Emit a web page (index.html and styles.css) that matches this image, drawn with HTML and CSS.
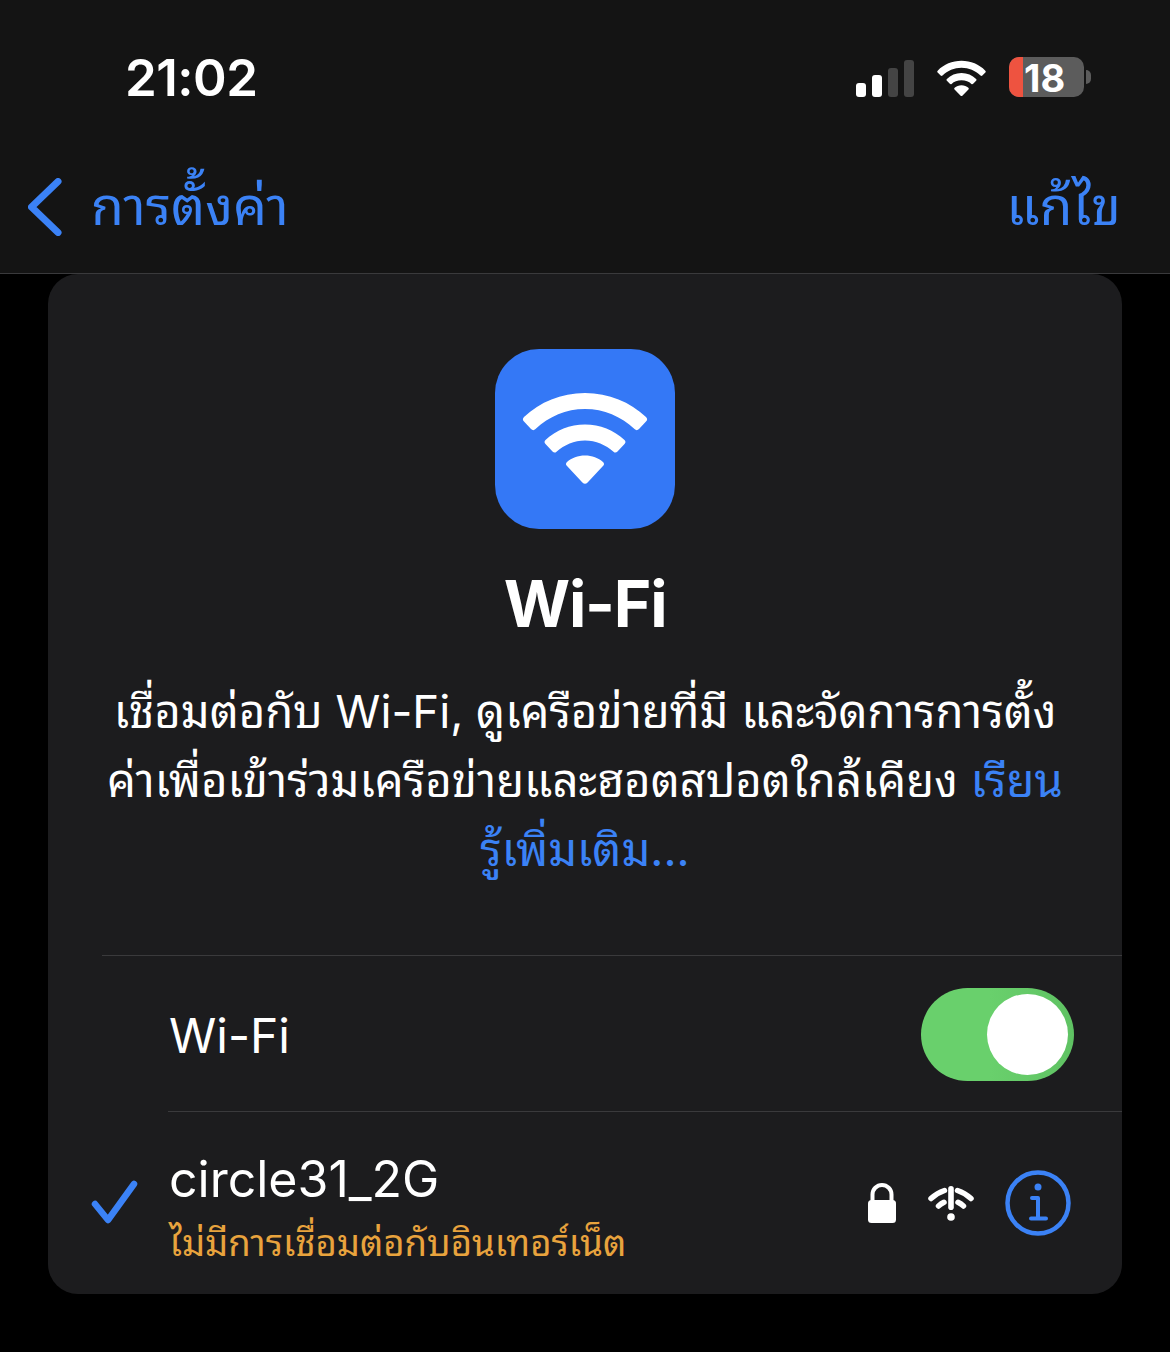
FILE: index.html
```html
<!DOCTYPE html>
<html lang="th">
<head>
  <meta charset="UTF-8" />
  <title>Wi-Fi</title>
  <link rel="stylesheet" href="styles.css">
</head>
<body>
  <header class="top">
    <div class="status">
      <span class="time">21:02</span>
      <div class="status-icons">
        <div class="signal">
          <i class="bar b1"></i><i class="bar b2"></i><i class="bar b3"></i><i class="bar b4"></i>
        </div>
        <svg class="status-wifi" viewBox="0 0 50 36">
          <path fill="#fff" d="M25 0C15.500 0 7 3.700 .7 10c-.6.600-.6 1.300 0 1.900l3 3.100c.6.600 1.300.6 1.900 0C10.800 9.900 17.500 7 25 7s14.200 2.900 19.400 8c.6.600 1.300.6 1.900 0l3-3.100c.6-.600.6-1.300 0-1.900C43 3.700 34.500 0 25 0z"/>
          <path fill="#fff" d="M25 12.500c-5.800 0-11 2.300-14.900 6-.6.600-.6 1.200 0 1.800l3 3.100c.6.600 1.200.6 1.800.1 2.500-2.200 5.900-3.600 10.100-3.600s7.600 1.400 10.100 3.600c.6.500 1.200.5 1.800-.1l3-3.100c.6-.600.6-1.200 0-1.800-3.900-3.700-9.100-6-14.900-6z"/>
          <path fill="#fff" d="M25 25c-2.800 0-5.200.9-7 2.500-.6.500-.6 1.100-.1 1.600l6 6.300c.7.700 1.500.7 2.200 0l6-6.300c.5-.5.5-1.100-.1-1.600-1.800-1.600-4.200-2.500-7-2.500z"/>
        </svg>
        <div class="battery">
          <div class="battery-body"><span class="battery-low"></span><span class="battery-num">18</span></div>
          <span class="battery-tip"></span>
        </div>
      </div>
    </div>
    <nav class="nav">
      <a class="back">
        <svg class="chevron" viewBox="0 0 34 58"><path d="M30 3.500 3.500 29 30 54.500" fill="none" stroke="#3b82f6" stroke-width="7" stroke-linecap="round" stroke-linejoin="round"/></svg>
        <span class="back-text">การตั้งค่า</span>
      </a>
      <a class="edit">แก้ไข</a>
    </nav>
  </header>

  <main class="card">
    <div class="hero">
      <div class="app-icon">
        <svg viewBox="0 0 126 92" class="app-wifi">
          <path fill="#fff" d="M63 1C39 1 18 10 2 25c-1.500 1.500-1.500 3 0 4.500l7 7.500c1.500 1.500 3 1.500 4.500 0C27 24.500 44 17 63 17s36 7.500 49.500 20c1.500 1.500 3 1.500 4.500 0l7-7.500c1.500-1.500 1.500-3 0-4.500C108 10 87 1 63 1z"/>
          <path fill="#fff" d="M63 32.500c-15 0-29 5.800-39.500 15.500-1.300 1.300-1.300 2.800 0 4l7 7.500c1.300 1.300 2.700 1.400 4 .2C42.500 53 52 48.500 63 48.500s20.500 4.500 28.500 11.200c1.300 1.200 2.700 1.100 4-.2l7-7.500c1.300-1.200 1.300-2.700 0-4C92 38.300 78 32.500 63 32.500z"/>
          <path fill="#fff" d="M63 63.500c-7 0-13.500 2.400-18 6.500-1.300 1.100-1.300 2.500-.2 3.700l15.600 16.700c1.700 1.800 3.500 1.800 5.200 0l15.600-16.700c1.100-1.200 1.100-2.600-.2-3.700-4.500-4.100-11-6.500-18-6.500z"/>
        </svg>
      </div>
      <h1 class="title">Wi-Fi</h1>
      <p class="desc">เชื่อมต่อกับ Wi-Fi, ดูเครือข่ายที่มี และจัดการการตั้ง<br>ค่าเพื่อเข้าร่วมเครือข่ายและฮอตสปอตใกล้เคียง <a class="link">เรียน<br>รู้เพิ่มเติม...</a></p>
    </div>

    <div class="row-wifi">
      <span class="row-label">Wi-Fi</span>
      <div class="toggle"><span class="knob"></span></div>
    </div>

    <div class="row-net">
      <svg class="check" viewBox="0 0 48 46"><path d="M4 24 17 40 43 4" fill="none" stroke="#3b82f6" stroke-width="6.500" stroke-linecap="round" stroke-linejoin="round"/></svg>
      <div class="net-text">
        <div class="net-name">circle31_2G</div>
        <div class="net-sub">ไม่มีการเชื่อมต่อกับอินเทอร์เน็ต</div>
      </div>
      <div class="net-icons">
        <svg class="lock" viewBox="0 0 28 40">
          <path d="M4.500 19V11.500a9.500 9.500 0 0 1 19 0V19" fill="none" stroke="#fff" stroke-width="4"/>
          <rect x="0" y="17" width="28" height="23" rx="3.500" fill="#fff"/>
        </svg>
        <svg class="nowifi" viewBox="0 0 46 38">
          <g fill="none" stroke="#fff" stroke-width="5.500" stroke-linecap="round">
            <path d="M3 14.500Q9 9 16.500 6.500"/>
            <path d="M43 14.500Q37 9 29.500 6.500"/>
            <path d="M10.500 22Q13 19.800 16 18.300"/>
            <path d="M35.500 22Q33 19.800 30 18.300"/>
          </g>
          <rect x="20.200" y="2" width="5.600" height="24" rx="2.800" fill="#fff"/>
          <circle cx="23" cy="33" r="3.800" fill="#fff"/>
        </svg>
        <svg class="info" viewBox="0 0 66 66">
          <circle cx="33" cy="33" r="30.500" fill="none" stroke="#3b82f6" stroke-width="4.500"/>
          <circle cx="33" cy="17" r="3.500" fill="#3b82f6"/>
          <path d="M27 28h6v20.500M26 48.500h15" fill="none" stroke="#3b82f6" stroke-width="4" stroke-linecap="round" stroke-linejoin="round"/>
        </svg>
      </div>
    </div>
  </main>
</body>
</html>
```
FILE: styles.css
```css
* { box-sizing: border-box; }
body { margin: 0; background: #000; color: #fff; font-family: Inter, "Noto Sans Thai Looped", "Noto Sans", "Noto Sans Thai", "Liberation Sans", sans-serif; width: 1170px; height: 1352px; overflow: hidden; }

.top { background: #141414; height: 274px; border-bottom: 1px solid #3a3a3c; }
.status { height: 156px; display: flex; align-items: center; justify-content: space-between; padding: 0 79px 0 125px; }
.time { font-size: 51px; font-weight: 600; letter-spacing: -0.5px; margin-bottom: 2px; }
.status-icons { display: flex; align-items: center; }
.signal { display: flex; align-items: flex-end; gap: 6px; height: 37px; margin-right: 23px; }
.bar { width: 10px; border-radius: 3px; background: #fff; display: block; }
.b1 { height: 14px; }
.b2 { height: 22px; }
.b3 { height: 29px; background: #444; }
.b4 { height: 37px; background: #444; }
.status-wifi { width: 49px; height: 37px; margin-right: 23px; }
.battery { display: flex; align-items: center; margin-bottom: 2px; }
.battery-body { width: 75px; height: 40px; border-radius: 10px; background: #5c5c5c; display: flex; align-items: center; }
.battery-low { width: 14px; height: 100%; background: #ee5340; border-radius: 10px 0 0 10px; }
.battery-num { font-size: 38px; line-height: 40px; font-weight: 700; margin: 2px 0 0 1px; }
.battery-tip { width: 5px; height: 14px; background: #5c5c5c; border-radius: 0 7px 7px 0; margin-left: 2px; }

.nav { height: 102px; display: flex; align-items: center; justify-content: space-between; padding: 0 49px 12px 28px; font-size: 53.500px; color: #3b82f6; }
.back { display: flex; align-items: center; gap: 29px; }
.chevron { width: 34px; height: 58px; margin-top: 12px; }

.card { margin: 0 48px; height: 1020px; background: #1c1c1e; border-radius: 30px; }
.hero { display: flex; flex-direction: column; align-items: center; padding: 75px 54px 0 0; height: 682px; border-bottom: 1px solid #3a3a3c; margin-left: 54px; }
.app-icon { width: 180px; height: 180px; border-radius: 44px; background: #3478f6; display: flex; align-items: center; justify-content: center; }
.app-wifi { width: 126px; height: 92px; margin-bottom: 3px; }
.title { font-size: 64px; font-weight: 700; letter-spacing: -1.200px; margin: 32px 0 0; line-height: 86px; }
.desc { margin: 30px 0 0; font-size: 45.500px; line-height: 69px; text-align: center; white-space: nowrap; font-weight: 400; }
.link { color: #3b82f6; }

.row-wifi { height: 156px; margin-left: 120px; padding-right: 48px; display: flex; align-items: center; justify-content: space-between; border-bottom: 1px solid #3a3a3c; }
.row-label { font-size: 48px; margin-top: 4px; margin-left: 1px; }
.toggle { width: 153px; height: 93px; border-radius: 47px; background: linear-gradient(90deg, #69d06c 45%, #5fc263); padding: 6px; display: flex; justify-content: flex-end; margin-top: 1px; }
.knob { width: 81px; height: 81px; border-radius: 50%; background: #fff; }

.row-net { height: 182px; display: flex; align-items: center; padding: 0 51px 0 43px; }
.check { width: 48px; height: 46px; margin-right: 30px; }
.net-text { flex: 1; margin-top: 15px; }
.net-name { font-size: 50px; line-height: 60px; }
.net-sub { font-size: 36.500px; line-height: 60px; margin-top: 4px; color: #e8a33d; }
.net-icons { display: flex; align-items: center; }
.lock { width: 28px; height: 40px; margin-right: 32px; }
.nowifi { width: 46px; height: 38px; margin-right: 31px; }
.info { width: 66px; height: 66px; }
```
